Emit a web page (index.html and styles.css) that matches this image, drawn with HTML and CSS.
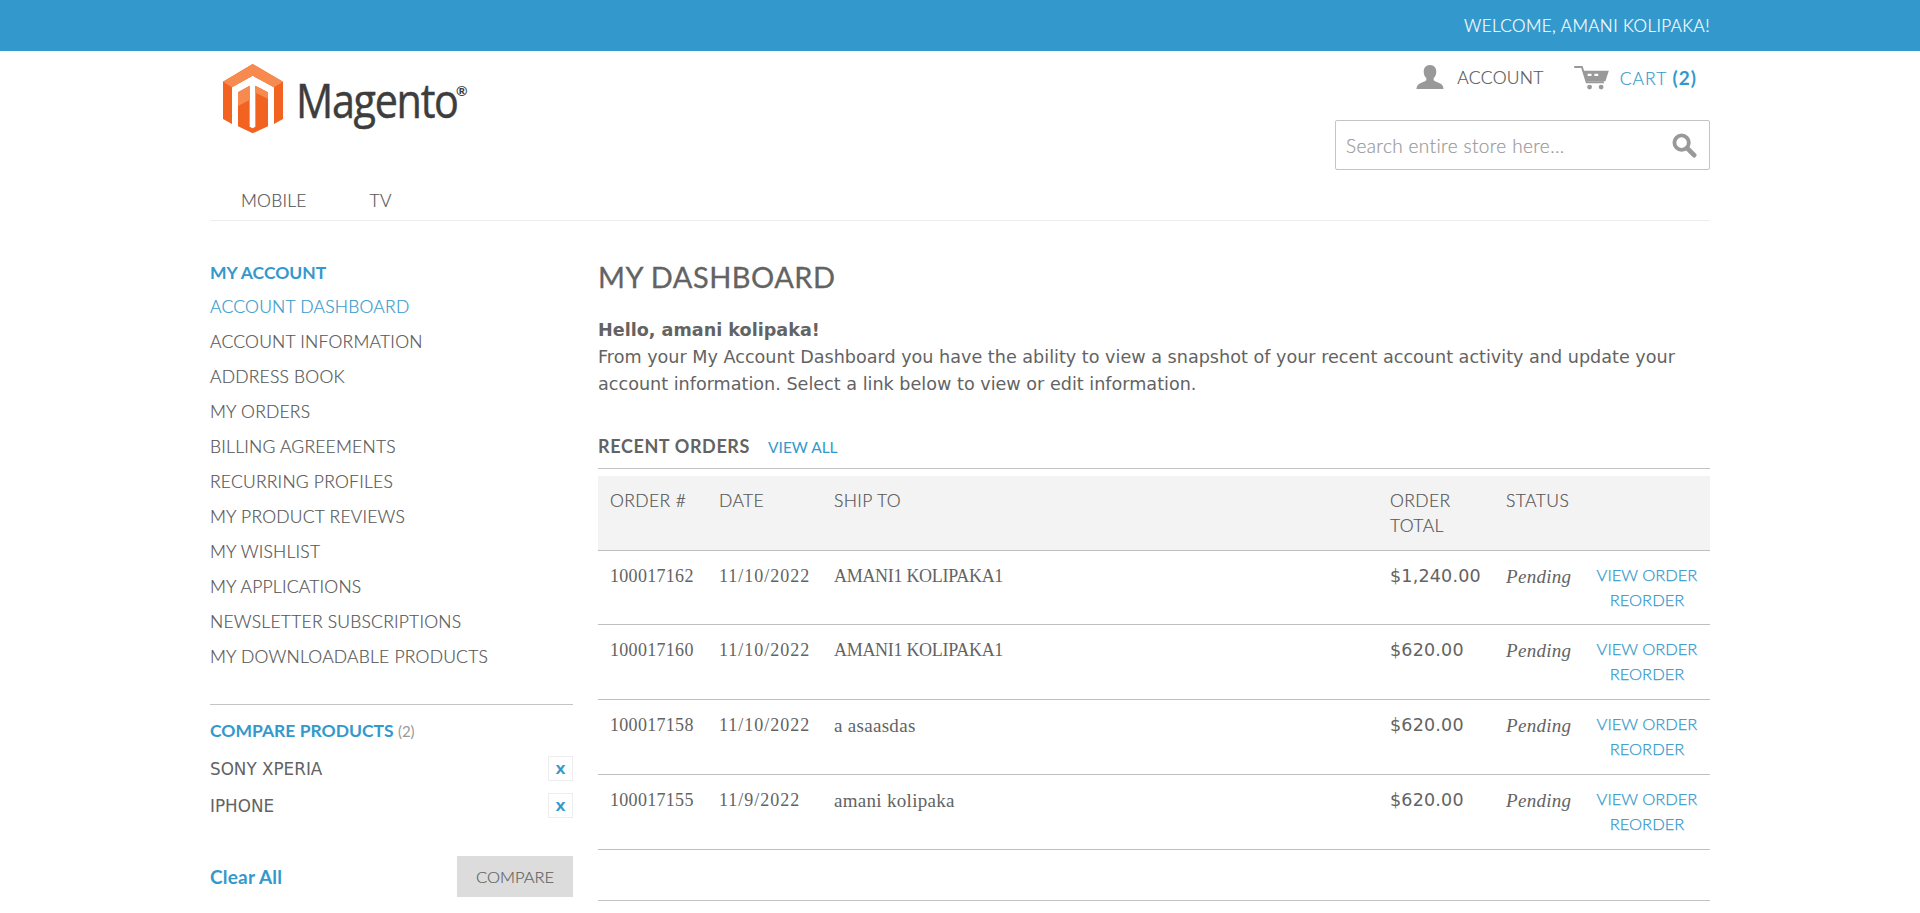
FILE: index.html
```html
<!DOCTYPE html>
<html lang="en">
<head>
<meta charset="utf-8">
<title>My Account</title>
<link rel="stylesheet" href="styles.css">
</head>
<body>
<div class="welcome-bar"><div class="wrap welcome">WELCOME, AMANI KOLIPAKA!</div></div>
<div class="wrap">
  <header class="header">
    <a class="logo" href="#">
      <svg class="logo-mark" viewBox="0 0 180 210" width="60" height="70">
        <path fill="#f26322" d="M0 53 89 0 180 53V165L153 180V70L89 35 27 70V180L0 165Z"/>
        <path fill="#f68a4f" d="M0 53 89 0 180 53 153 70 89 35 27 70Z"/>
        <path fill="#f26322" d="M45 85 80 65V188L89 193 97 188V65L135 85V187L89 208 45 187Z"/>
        <path fill="#f68a4f" d="M45 85 80 65V108L45 126Z"/>
        <path fill="#f68a4f" d="M97 65 135 85V104L97 86Z"/>
      </svg>
      <span class="logo-text">Magento</span><span class="logo-reg">®</span>
    </a>
    <div class="header-right">
      <div class="account-links">
        <a class="account-link" href="#">
          <svg class="icon-user" viewBox="0 0 30 26" width="28" height="24"><path fill="#999" d="M15 0c4.600 0 6.800 3.200 6.800 7.200 0 3-1.200 5.500-2.800 7v2.300c1.500 1.700 5.200 2.200 8 4.200 1.300.9 2.200 2.300 2.700 5.300H.3c.5-3 1.400-4.400 2.700-5.300 2.800-2 6.500-2.500 8-4.200v-2.300c-1.600-1.500-2.800-4-2.800-7C8.200 3.200 10.400 0 15 0z"/></svg>
          <span>ACCOUNT</span>
        </a>
        <a class="cart-link" href="#">
          <svg class="icon-cart" viewBox="0 0 36 26" width="35" height="25">
            <path fill="none" stroke="#999" stroke-width="2" d="M0 2h8l5 16h18"/>
            <path fill="#999" d="M9 6h27l-3.500 11H12.500zM14 9v2.500h4V9zm7 0v2.500h4V9z" fill-rule="evenodd"/>
            <circle fill="#999" cx="16" cy="23" r="2.500"/><circle fill="#999" cx="28" cy="23" r="2.500"/>
          </svg>
          <span class="cart-label">CART <b class="cart-count">(2)</b></span>
        </a>
      </div>
      <form class="search">
        <span class="search-text">Search entire store here...</span>
        <svg class="icon-search" viewBox="0 0 26 26" width="25" height="25">
          <circle cx="10" cy="10" r="7.500" fill="none" stroke="#999" stroke-width="4"/>
          <path stroke="#999" stroke-width="5" stroke-linecap="round" d="M16 16l7 7"/>
        </svg>
      </form>
    </div>
  </header>
  <nav class="nav"><a href="#">MOBILE</a><a href="#">TV</a></nav>
  <div class="columns">
    <aside class="sidebar">
      <h3 class="side-title">MY ACCOUNT</h3>
      <ul class="side-list">
        <li class="current">ACCOUNT DASHBOARD</li>
        <li>ACCOUNT INFORMATION</li>
        <li>ADDRESS BOOK</li>
        <li>MY ORDERS</li>
        <li>BILLING AGREEMENTS</li>
        <li>RECURRING PROFILES</li>
        <li>MY PRODUCT REVIEWS</li>
        <li>MY WISHLIST</li>
        <li>MY APPLICATIONS</li>
        <li>NEWSLETTER SUBSCRIPTIONS</li>
        <li>MY DOWNLOADABLE PRODUCTS</li>
      </ul>
      <section class="compare">
        <h3 class="compare-title">COMPARE PRODUCTS <span class="compare-count">(2)</span></h3>
        <div class="compare-item"><span>SONY XPERIA</span><a class="remove" href="#">X</a></div>
        <div class="compare-item"><span>IPHONE</span><a class="remove" href="#">X</a></div>
        <div class="compare-actions"><a class="clear" href="#">Clear All</a><button class="compare-btn" type="button">COMPARE</button></div>
      </section>
    </aside>
    <main class="main">
      <h1 class="page-title">MY DASHBOARD</h1>
      <p class="hello"><strong>Hello, amani kolipaka!</strong><br>From your My Account Dashboard you have the ability to view a snapshot of your recent account activity and update your account information. Select a link below to view or edit information.</p>
      <div class="orders-head"><h2>RECENT ORDERS</h2><a href="#">VIEW ALL</a></div>
      <table class="orders">
        <colgroup><col class="c1"><col class="c2"><col class="c3"><col class="c4"><col class="c5"><col class="c6"></colgroup>
        <thead><tr><th>ORDER #</th><th>DATE</th><th>SHIP TO</th><th>ORDER TOTAL</th><th>STATUS</th><th></th></tr></thead>
        <tbody>
          <tr><td class="num">100017162</td><td class="date">11/10/2022</td><td class="upper">AMANI1 KOLIPAKA1</td><td class="total">$1,240.00</td><td class="status">Pending</td><td class="actions"><a href="#">VIEW ORDER</a><a href="#">REORDER</a></td></tr>
          <tr><td class="num">100017160</td><td class="date">11/10/2022</td><td class="upper">AMANI1 KOLIPAKA1</td><td class="total">$620.00</td><td class="status">Pending</td><td class="actions"><a href="#">VIEW ORDER</a><a href="#">REORDER</a></td></tr>
          <tr><td class="num">100017158</td><td class="date">11/10/2022</td><td class="lower">a asaasdas</td><td class="total">$620.00</td><td class="status">Pending</td><td class="actions"><a href="#">VIEW ORDER</a><a href="#">REORDER</a></td></tr>
          <tr><td class="num">100017155</td><td class="date">11/9/2022</td><td class="lower">amani kolipaka</td><td class="total">$620.00</td><td class="status">Pending</td><td class="actions"><a href="#">VIEW ORDER</a><a href="#">REORDER</a></td></tr>
        </tbody>
      </table>
      <div class="spacer"></div>
    </main>
  </div>
</div>
</body>
</html>
```
FILE: styles.css
```css
* { box-sizing: border-box; }
html, body { margin: 0; padding: 0; }
body { font-family: Lato, "Open Sans", sans-serif; font-weight: 300; -webkit-text-stroke: .2px; color: #555; background: #fff; height: 913px; overflow: hidden; }
a { color: inherit; text-decoration: none; }
h1, h2, h3, p, ul { margin: 0; padding: 0; }
ul { list-style: none; }
.wrap { width: 1500px; margin-left: 210px; }
.welcome-bar { background: #3399cc; height: 51px; }
.welcome { height: 51px; line-height: 51px; text-align: right; color: #fff; font-size: 17px; letter-spacing: .45px; }
.header { display: flex; justify-content: space-between; height: 129px; }
.logo { display: flex; align-items: flex-start; padding: 13px 0 0 13px; }
.logo-mark { flex: none; }
.logo-text { font-family: "Open Sans", sans-serif; font-weight: 400; font-size: 47px; line-height: 54px; margin: 9px 0 0 13px; color: #3d3d3d; letter-spacing: -1.5px; transform: scaleX(.88); transform-origin: left center; -webkit-text-stroke: .5px #3d3d3d; width: 159px; flex: none; }
.logo-reg { font-size: 14px; margin: 18px 0 0 1px; color: #3d3d3d; font-weight: 700; -webkit-text-stroke: 0; }
.header-right { display: flex; flex-direction: column; align-items: flex-end; }
.account-links { display: flex; align-items: center; height: 52px; margin-bottom: 17px; padding-right: 13px; font-size: 17.500px; letter-spacing: .3px; }
.account-link { display: flex; align-items: center; gap: 13px; margin-right: 30px; }
.cart-link { display: flex; align-items: center; gap: 11px; color: #3399cc; }
.cart-label { letter-spacing: 1px; }
.cart-count { font-weight: 700; font-size: 19px; letter-spacing: 1px; -webkit-text-stroke: 0; }
.search { width: 375px; height: 50px; border: 1px solid #c4c4c4; border-radius: 2px; display: flex; align-items: center; justify-content: space-between; padding: 0 12px 0 10px; }
.search-text { font-size: 19px; letter-spacing: .38px; color: #999; }
.nav { display: flex; height: 41px; border-bottom: 1px solid #ededed; padding-left: 31px; gap: 63px; font-size: 17.500px; letter-spacing: .2px; line-height: 41px; }
.columns { display: flex; justify-content: space-between; }
.sidebar { width: 363px; padding-top: 38px; }
.side-title { font-size: 17.500px; line-height: 27px; color: #3399cc; font-weight: 700; -webkit-text-stroke: 0; }
.side-list { margin-top: 3px; }
.side-list li { font-size: 17.500px; line-height: 35px; letter-spacing: .22px; }
.side-list .current { color: #3399cc; }
.compare { margin-top: 30px; border-top: 1px solid #c4c4c4; padding-top: 13px; }
.compare-title { font-size: 17.500px; line-height: 26px; font-weight: 700; color: #3399cc; -webkit-text-stroke: 0; }
.compare-count { color: #999; font-weight: 400; font-size: 15px; }
.compare-item { display: flex; justify-content: space-between; align-items: center; height: 37px; font-family: "DejaVu Sans", sans-serif; font-weight: 400; font-size: 16.800px; color: #636363; -webkit-text-stroke: 0; }
.compare-item:first-of-type { margin-top: 6px; }
.remove { width: 25px; height: 25px; border: 1px solid #ededed; color: #3399cc; font-weight: 700; font-size: 13px; line-height: 25px; text-align: center; }
.compare-actions { display: flex; justify-content: space-between; align-items: center; margin-top: 32px; }
.clear { color: #3399cc; font-size: 19px; font-weight: 700; letter-spacing: .2px; -webkit-text-stroke: 0; }
.compare-btn { width: 116px; height: 41px; border: 0; background: #dcdcdc; color: #636363; font-family: inherit; font-weight: 300; font-size: 16.500px; }
.main { width: 1112px; padding-top: 38px; }
.page-title { font-size: 29px; font-weight: 400; line-height: 36px; color: #636363; letter-spacing: .5px; -webkit-text-stroke: .3px #636363; }
.hello { margin-top: 22px; font-family: "DejaVu Sans", sans-serif; font-weight: 400; color: #636363; font-size: 17.600px; line-height: 27px; -webkit-text-stroke: 0; }
.orders-head { display: flex; align-items: baseline; gap: 18px; margin-top: 33px; height: 38px; border-bottom: 1px solid #c4c4c4; }
.orders-head h2 { font-size: 18px; font-weight: 700; line-height: 30px; letter-spacing: .62px; color: #636363; -webkit-text-stroke: 0; }
.orders-head a { color: #3399cc; font-weight: 400; font-size: 15.500px; -webkit-text-stroke: 0; }
.orders { width: 1112px; table-layout: fixed; border-collapse: collapse; margin-top: 7px; }
.c1 { width: 109px; } .c2 { width: 115px; } .c3 { width: 556px; } .c4 { width: 116px; } .c5 { width: 90px; } .c6 { width: 126px; }
.orders th { background: #f3f3f3; height: 74px; padding: 12px; text-align: left; vertical-align: top; font-weight: 300; font-size: 17.500px; line-height: 25px; letter-spacing: .4px; border-bottom: 1px solid #bfbfbf; }
.orders td { height: 75px; padding: 13px 12px 0; vertical-align: top; font-family: "Liberation Serif", serif; font-weight: 400; color: #636363; font-size: 18px; line-height: 25px; border-bottom: 1px solid #bfbfbf; -webkit-text-stroke: 0; }
.orders tbody tr:first-child td { height: 74px; }
.orders td.num { letter-spacing: .3px; }
.orders td.date { letter-spacing: 1px; }
.orders td.upper { letter-spacing: -.3px; }
.orders td.lower { font-size: 19px; letter-spacing: .3px; }
.orders td.total { font-family: "DejaVu Sans", sans-serif; font-size: 17.500px; letter-spacing: .2px; }
.orders td.status { font-style: italic; font-size: 19px; letter-spacing: .3px; }
.orders td.actions { font-family: Lato, sans-serif; font-weight: 300; font-size: 16.500px; text-align: center; padding: 12px 0 0; -webkit-text-stroke: .25px; }
.actions a { display: block; color: #3399cc; }
.spacer { height: 51px; border-bottom: 1px solid #c4c4c4; }
```
